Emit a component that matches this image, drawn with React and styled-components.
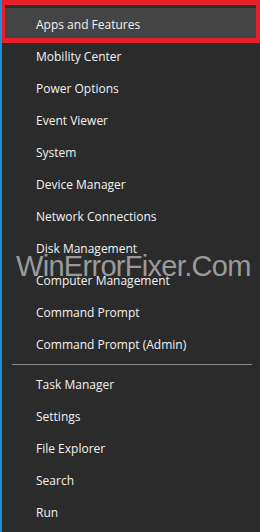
import styled, { createGlobalStyle } from "styled-components";

const GlobalStyle = createGlobalStyle`
  html, body {
    margin: 0;
    padding: 0;
    background: #2b2b2b;
  }
  * { box-sizing: border-box; }
`;

const Menu = styled.nav`
  position: relative;
  width: 260px;
  height: 532px;
  padding-top: 8px;
  background: #2b2b2b;
  border-left: 2px solid #1d8fd6;
  font-family: "Open Sans", "Noto Sans", sans-serif;
  overflow: hidden;
`;

const Item = styled.div`
  display: flex;
  align-items: center;
  height: 32px;
  color: #f2f2f2;
  font-size: 12px;
  background: ${(p) => (p.$active ? "#444444" : "transparent")};
  margin-left: ${(p) => (p.$active ? "-2px" : "0")};
  padding-left: ${(p) => (p.$active ? "36px" : "34px")};
`;

const Separator = styled.hr`
  border: none;
  height: 1px;
  margin: 4px 8px 3px 10px;
  background: #8a8a8a;
`;

const Annotation = styled.div`
  position: absolute;
  top: 0;
  left: -2px;
  width: 261px;
  height: 43px;
  border: 5px solid #e81f2b;
  pointer-events: none;
`;

const Watermark = styled.div`
  position: absolute;
  top: 250px;
  left: 14px;
  font-family: "Liberation Sans", Arial, sans-serif;
  font-size: 29px;
  letter-spacing: -0.7px;
  color: rgba(205, 205, 205, 0.7);
  white-space: nowrap;
  pointer-events: none;
`;

const topItems = [
  "Apps and Features",
  "Mobility Center",
  "Power Options",
  "Event Viewer",
  "System",
  "Device Manager",
  "Network Connections",
  "Disk Management",
  "Computer Management",
  "Command Prompt",
  "Command Prompt (Admin)",
];

const bottomItems = ["Task Manager", "Settings", "File Explorer", "Search", "Run"];

export default function App() {
  return (
    <>
      <GlobalStyle />
      <Menu>
        {topItems.map((label, i) => (
          <Item key={label} $active={i === 0}>
            {label}
          </Item>
        ))}
        <Separator />
        {bottomItems.map((label) => (
          <Item key={label}>{label}</Item>
        ))}
        <Annotation />
        <Watermark>WinErrorFixer.Com</Watermark>
      </Menu>
    </>
  );
}
